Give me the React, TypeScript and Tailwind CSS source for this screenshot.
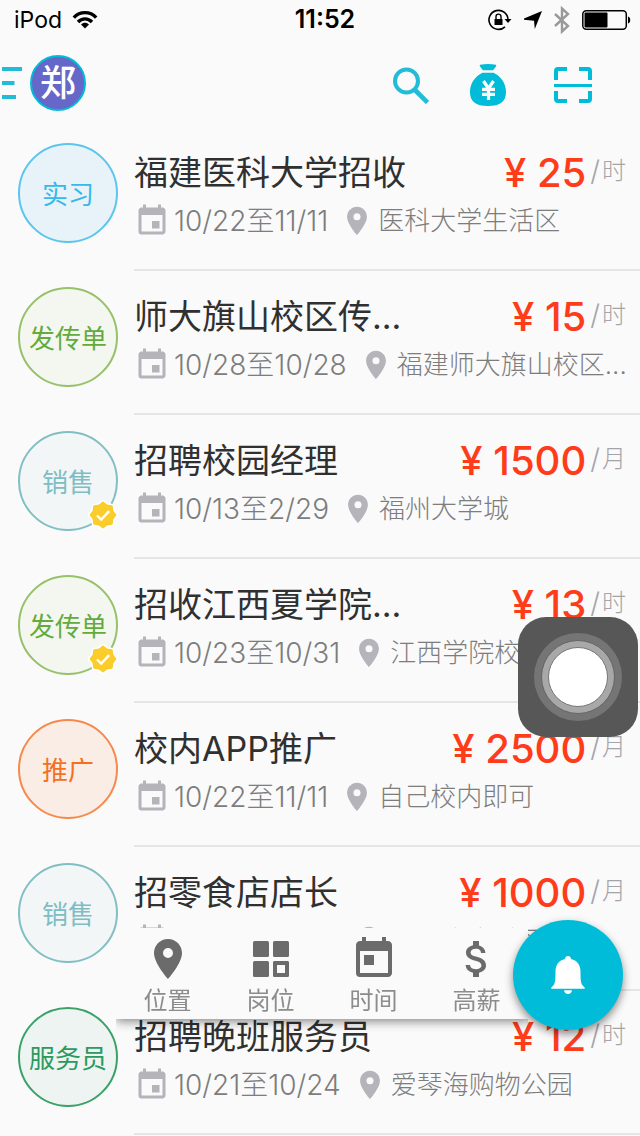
import React from "react";
import { MdEvent, MdPlace, MdToday, MdAttachMoney } from "react-icons/md";

type Job = {
  tag: string;
  tone: string;
  title: string;
  dates: string;
  place: string;
  pay: string;
  unit: string;
  verified?: boolean;
};

const tones = {
  sky: "border-[#5bc5ec] bg-[#e8f3f9] text-[#36b9ea]",
  green: "border-[#97c06a] bg-[#f3f7f0] text-[#64aa3c]",
  teal: "border-[#82bfc4] bg-[#f2f6f7] text-[#7dbdc3]",
  orange: "border-[#f58a4c] bg-[#faede6] text-[#f3701f]",
  forest: "border-[#3aa269] bg-[#eef4f2] text-[#2b9a5e]",
};

const jobs: Job[] = [
  { tag: "实习", tone: tones.sky, title: "福建医科大学招收", dates: "10/22至11/11", place: "医科大学生活区", pay: "25", unit: "时" },
  { tag: "发传单", tone: tones.green, title: "师大旗山校区传...", dates: "10/28至10/28", place: "福建师大旗山校区...", pay: "15", unit: "时" },
  { tag: "销售", tone: tones.teal, title: "招聘校园经理", dates: "10/13至2/29", place: "福州大学城", pay: "1500", unit: "月", verified: true },
  { tag: "发传单", tone: tones.green, title: "招收江西夏学院...", dates: "10/23至10/31", place: "江西学院校区", pay: "13", unit: "时", verified: true },
  { tag: "推广", tone: tones.orange, title: "校内APP推广", dates: "10/22至11/11", place: "自己校内即可", pay: "2500", unit: "月" },
  { tag: "销售", tone: tones.teal, title: "招零食店店长", dates: "10/23至10/31", place: "福州大学城区", pay: "1000", unit: "月" },
  { tag: "服务员", tone: tones.forest, title: "招聘晚班服务员", dates: "10/21至10/24", place: "爱琴海购物公园", pay: "12", unit: "时" },
];

function StatusBar() {
  return (
    <div className="grid h-10 grid-cols-[1fr_auto_1fr] items-center pl-3.5 pr-2 text-black">
      <div className="flex items-center gap-2.5 text-[23px]">
        <span>iPod</span>
        <svg width="26" height="20" viewBox="0 0 26 20" fill="none" stroke="#000" strokeWidth="3.4" aria-hidden="true">
          <path d="M1.8 7.6C8 1 18 1 24.2 7.6" />
          <path d="M6 12c4-4.2 10-4.2 14 0" />
          <path d="M13 18.6l-4-4.2c2.300-2.200 5.700-2.200 8 0z" fill="#000" stroke="none" />
        </svg>
      </div>
      <span className="pl-1 text-[25px] font-semibold">11:52</span>
      <div className="flex items-center justify-end gap-3">
        <svg width="24" height="22" viewBox="0 0 24 22" fill="none" stroke="#000" aria-hidden="true">
          <path d="M20 11A9.500 9.500 0 1 0 17 17.800" strokeWidth="1.600" />
          <path d="M16.500 10h7l-3.500 4z" fill="#000" stroke="none" />
          <rect x="6.500" y="10" width="8" height="6" rx="0.600" fill="#000" stroke="none" />
          <path d="M8 10V7.600a2.500 2.500 0 0 1 5 0V10" strokeWidth="1.400" />
        </svg>
        <svg width="18" height="18" viewBox="0 0 18 18" aria-hidden="true">
          <path d="M18 0L10.800 18 10 9.800 0 8.800V7.600z" fill="#000" />
        </svg>
        <svg width="16" height="28" viewBox="0 0 16 28" fill="none" stroke="#999" strokeWidth="2.400" aria-hidden="true">
          <path d="M1 8l13 12-6 5.500V2.500L14 8 1 20" />
        </svg>
        <svg width="50" height="20" viewBox="0 0 50 20" aria-hidden="true">
          <rect x="0.800" y="0.800" width="43.500" height="18.400" rx="3.400" fill="none" stroke="#000" strokeWidth="1.500" />
          <rect x="2.500" y="2.500" width="23" height="15" rx="1" fill="#000" />
          <path d="M46 6.500c3 .5 3 6.500 0 7z" fill="#000" />
        </svg>
      </div>
    </div>
  );
}

function Header() {
  return (
    <header className="flex h-[87px] items-center pb-px pr-[47px]">
      <button aria-label="菜单" className="flex items-center gap-2 pl-0.5">
        <svg width="20" height="32" viewBox="0 0 20 32" fill="#22bcd8" aria-hidden="true">
          <rect width="20" height="4" />
          <rect y="14" width="12.500" height="4" />
          <rect y="28" width="14" height="4" />
        </svg>
        <span className="flex size-14 items-center justify-center rounded-full border-2 border-[#00bcd8] bg-[#6567c9] text-4xl font-medium text-white">
          郑
        </span>
      </button>
      <div className="ml-auto flex items-center gap-10 pt-1">
        <button aria-label="搜索">
          <svg width="38" height="38" viewBox="0 0 38 38" fill="none" stroke="#22bcd8" aria-hidden="true">
            <circle cx="15.500" cy="15" r="11.500" strokeWidth="4" />
            <path d="M24 24L36.500 36.500" strokeWidth="4.600" />
          </svg>
        </button>
        <button aria-label="钱包">
          <svg width="38" height="44" viewBox="0 0 38 44" aria-hidden="true">
            <path
              d="M11.300 1.800C16 .6 22 .6 26.700 1.800c.6.2.8.8.4 1.500L25 6.300c-.5.7-1 1-1.800 1h-8.400c-.8 0-1.300-.3-1.800-1l-2.100-3c-.4-.7-.2-1.300.4-1.500zM13.500 9.800h11C32 13.500 37 20.500 37 29c0 9.500-5.500 14-18 14S1 38.500 1 29c0-8.500 5-15.500 12.500-19.200z"
              fill="#00bcd8"
            />
            <path d="M14.500 18l5 7.500 5-7.500M19.500 25v12M13 26.300h13M13 31.300h13" fill="none" stroke="#fafafa" strokeWidth="3.200" />
          </svg>
        </button>
        <button aria-label="扫一扫" className="pl-1.5">
          <svg width="40" height="38" viewBox="0 0 40 38" fill="none" stroke="#00bcd8" strokeWidth="4" aria-hidden="true">
            <path d="M3 14V5a2 2 0 0 1 2-2h9M26 3h9a2 2 0 0 1 2 2v9M37 25v8a2 2 0 0 1-2 2h-9M14 35H5a2 2 0 0 1-2-2v-8" />
            <path d="M1 19.500h38" strokeWidth="3" />
          </svg>
        </button>
      </div>
    </header>
  );
}

const badgeShape =
  "M0-12.500L3.900-9.500 8.800-8.800 9.500-3.900 12.500 0 9.500 3.900 8.800 8.800 3.900 9.500 0 12.500-3.900 9.500-8.800 8.800-9.500 3.900-12.500 0-9.500-3.900-8.800-8.800-3.900-9.500z";

function VerifiedBadge() {
  return (
    <svg className="absolute bottom-px right-0" width="30" height="30" viewBox="-15 -15 30 30" role="img" aria-label="已认证">
      <path d={badgeShape} fill="#fff" stroke="#fff" strokeWidth="5" strokeLinejoin="round" />
      <path d={badgeShape} fill="#fbcd2b" stroke="#fbcd2b" strokeWidth="1.800" strokeLinejoin="round" />
      <path d="M-6 .5L-1.800 4.600 6.200-3.800" fill="none" stroke="#fff" strokeWidth="2.400" />
    </svg>
  );
}

function JobRow({ job }: { job: Job }) {
  return (
    <li className="flex gap-4 pl-[18px]">
      <div className="relative mt-4 size-[100px] shrink-0">
        <span className={`flex size-full items-center justify-center rounded-full border-2 pt-0.5 text-[26px] ${job.tone}`}>
          {job.tag}
        </span>
        {job.verified && <VerifiedBadge />}
      </div>
      <div className="min-w-0 flex-1 border-b-2 border-[#e5e5e5] pb-8 pr-3.5 pt-[26px]">
        <div className="flex h-10 items-center justify-between">
          <h2 className="truncate text-[34px] leading-10 text-[#303030]">{job.title}</h2>
          <div className="flex shrink-0 items-center gap-1">
            <span className="text-[40px] font-medium leading-10 text-[#ff3c1a]">¥ {job.pay}</span>
            <span className="flex items-center gap-0.5 pb-1 text-2xl font-light leading-8 text-[#a4a4aa]">
              <span className="text-[28px]">/</span>
              <span>{job.unit}</span>
            </span>
          </div>
        </div>
        <div className="mt-3 flex h-8 items-center whitespace-nowrap text-[26px] font-light leading-8 text-[#7d7d7d]">
          <MdEvent className="mr-1 size-9 shrink-0 text-[#b4b4ba]" />
          <span className="text-[28px]">{job.dates}</span>
          <MdPlace className="ml-3 mr-1 size-[34px] shrink-0 text-[#b4b4ba]" />
          <span>{job.place}</span>
        </div>
      </div>
    </li>
  );
}

function PostIcon() {
  return (
    <svg className="size-12" viewBox="0 0 24 24" fill="currentColor" aria-hidden="true">
      <rect x="3" y="3" width="8" height="8" rx="0.800" />
      <rect x="13" y="3" width="8" height="8" rx="0.800" />
      <rect x="3" y="13" width="8" height="8" rx="0.800" />
      <path fillRule="evenodd" d="M13.800 13h6.400c.5 0 .8.3.8.8v6.400c0 .5-.3.8-.8.8h-6.400c-.5 0-.8-.3-.8-.8v-6.400c0-.5.3-.8.8-.8zM15 15v4h4v-4z" />
    </svg>
  );
}

const filters = [
  { label: "位置", icon: <MdPlace className="size-12" /> },
  { label: "岗位", icon: <PostIcon /> },
  { label: "时间", icon: <MdToday className="size-12" /> },
  { label: "高薪", icon: <MdAttachMoney className="size-12" /> },
];

function FilterBar() {
  return (
    <nav className="fixed bottom-[117px] right-28 grid grid-cols-4 bg-[#fafafa] pb-0.5 pt-[7px] shadow-[0_2px_10px_rgba(0,0,0,0.5)] [clip-path:inset(0_0_-14px_0)]">
      {filters.map((f) => (
        <button key={f.label} className="flex w-[103px] flex-col items-center text-[#6b6b6b]">
          {f.icon}
          <span className="mt-0.5 text-2xl leading-8 text-[#8c8c8c]">{f.label}</span>
        </button>
      ))}
    </nav>
  );
}

function NotifyButton() {
  return (
    <button
      aria-label="通知"
      className="fixed bottom-[106px] right-[17px] flex size-[110px] items-center justify-center rounded-full bg-[#00bcd8] shadow-[0_4px_8px_rgba(0,0,0,0.45)]"
    >
      <svg width="34" height="38" viewBox="0 0 34 38" fill="#fff" aria-hidden="true">
        <path d="M17 0c1.700 0 2.900 1.100 3 3.100 6 1.300 9.500 6 9.500 12.400 0 6.500.2 11.500 1.800 13.500.8 1 1.900 1.800 2.400 2.800.3.600 0 1-.7 1H1c-.7 0-1-.4-.7-1 .5-1 1.600-1.800 2.400-2.800 1.600-2 1.800-7 1.800-13.500C4.500 9.100 8 4.400 14 3.100 14.100 1.100 15.300 0 17 0z" />
        <path d="M13 34.300h8c-.3 2.300-1.800 3.700-4 3.700s-3.700-1.400-4-3.700z" />
      </svg>
    </button>
  );
}

function AssistiveTouch() {
  return (
    <button
      aria-label="辅助触控"
      className="fixed right-0.5 top-[617px] flex size-[120px] items-center justify-center rounded-[28px] bg-[#575757]"
    >
      <span className="flex size-[88px] items-center justify-center rounded-full bg-[#757575]">
        <span className="flex size-[74px] items-center justify-center rounded-full border border-[#666] bg-[#a8a8a8]">
          <span className="size-[60px] rounded-full border border-[#777] bg-white" />
        </span>
      </span>
    </button>
  );
}

export default function App() {
  return (
    <div className="min-h-screen bg-[#fafafa] font-['Inter','Noto_Sans_CJK_SC',sans-serif]">
      <StatusBar />
      <Header />
      <main>
        <ul>
          {jobs.map((job) => (
            <JobRow key={job.title} job={job} />
          ))}
        </ul>
      </main>
      <FilterBar />
      <NotifyButton />
      <AssistiveTouch />
    </div>
  );
}
